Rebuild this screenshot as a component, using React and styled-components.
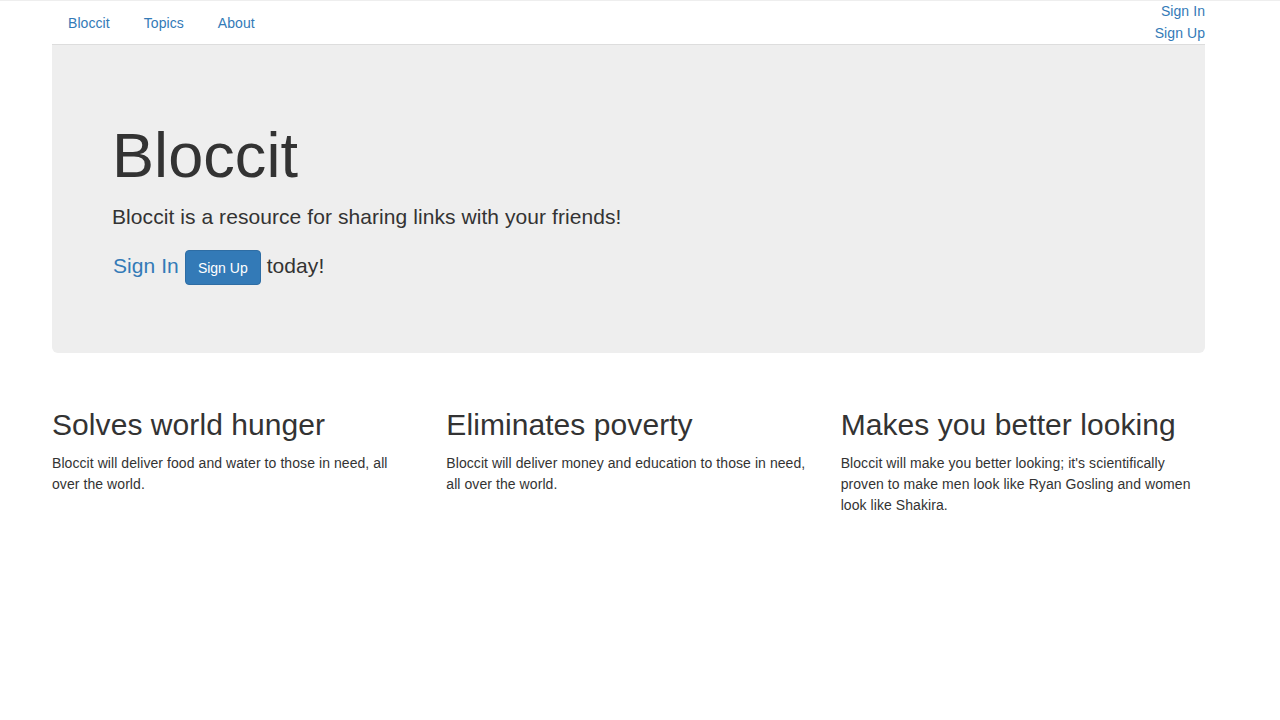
import React from 'react'
import styled, { createGlobalStyle } from 'styled-components'

const GlobalStyle = createGlobalStyle`
  html, body {
    margin: 0;
    padding: 0;
    background: #fff;
  }
  body {
    border-top: 1px solid #eee;
    font-family: "Liberation Sans", Arial, Helvetica, sans-serif;
    font-size: 14px;
    line-height: 1.42857;
    letter-spacing: 0.005em;
    color: #333;
  }
  * {
    box-sizing: border-box;
  }
`

const Container = styled.div`
  width: 1153px;
  margin-left: 52px;
  margin-top: -1px;
`

const Nav = styled.nav`
  display: flex;
  justify-content: space-between;
  align-items: flex-start;
  height: 45px;
  border-bottom: 1px solid #ddd;
`

const Tabs = styled.ul`
  display: flex;
  list-style: none;
  margin: 0;
  padding: 13px 0 0 0;
  gap: 2px;
`

const Tab = styled.li`
  a {
    display: block;
    padding: 0 16px;
    line-height: 20px;
    color: #337ab7;
    text-decoration: none;
  }
`

const UserLinks = styled.div`
  display: flex;
  flex-direction: column;
  align-items: flex-end;

  a {
    line-height: 22px;
    color: #337ab7;
    text-decoration: none;
  }
`

const Jumbotron = styled.div`
  background: #eee;
  border-radius: 0 0 6px 6px;
  padding: 76px 60px 68px;
`

const Heading = styled.h1`
  margin: 0;
  font-size: 63px;
  font-weight: 400;
  line-height: 69px;
  color: #333;
`

const Lead = styled.p`
  margin: 12px 0 0;
  font-size: 21px;
  line-height: 30px;
`

const CallToAction = styled.div`
  display: flex;
  align-items: baseline;
  gap: 6px;
  margin-top: 18px;
  font-size: 21px;
  line-height: 30px;

  a {
    margin-left: 1px;
    color: #337ab7;
    text-decoration: none;
  }
`

const Button = styled.button`
  height: 35px;
  padding: 0 12px;
  border: 1px solid #2e6da4;
  border-radius: 4px;
  background-color: #337ab7;
  color: #fff;
  font-family: inherit;
  font-size: 14px;
  letter-spacing: 0;
  cursor: pointer;
`

const Features = styled.div`
  display: grid;
  grid-template-columns: repeat(3, 1fr);
  column-gap: 30px;
  margin-top: 55px;
`

const Feature = styled.div``

const FeatureTitle = styled.h2`
  margin: 0 0 12px;
  font-size: 30px;
  font-weight: 400;
  line-height: 33px;
`

const FeatureText = styled.p`
  margin: 0;
  font-size: 14px;
  line-height: 21px;
`

const features = [
  {
    title: 'Solves world hunger',
    text: 'Bloccit will deliver food and water to those in need, all over the world.',
  },
  {
    title: 'Eliminates poverty',
    text: 'Bloccit will deliver money and education to those in need, all over the world.',
  },
  {
    title: 'Makes you better looking',
    text: "Bloccit will make you better looking; it's scientifically proven to make men look like Ryan Gosling and women look like Shakira.",
  },
]

const App = () => {
  return (
    <>
      <GlobalStyle />
      <Container>
        <Nav>
          <Tabs>
            <Tab><a href="#">Bloccit</a></Tab>
            <Tab><a href="#">Topics</a></Tab>
            <Tab><a href="#">About</a></Tab>
          </Tabs>
          <UserLinks>
            <a href="#">Sign In</a>
            <a href="#">Sign Up</a>
          </UserLinks>
        </Nav>

        <Jumbotron>
          <Heading>Bloccit</Heading>
          <Lead>Bloccit is a resource for sharing links with your friends!</Lead>
          <CallToAction>
            <a href="#">Sign In</a>
            <Button type="button">Sign Up</Button>
            <span>today!</span>
          </CallToAction>
        </Jumbotron>

        <Features>
          {features.map((f) => (
            <Feature key={f.title}>
              <FeatureTitle>{f.title}</FeatureTitle>
              <FeatureText>{f.text}</FeatureText>
            </Feature>
          ))}
        </Features>
      </Container>
    </>
  )
}

export default App
